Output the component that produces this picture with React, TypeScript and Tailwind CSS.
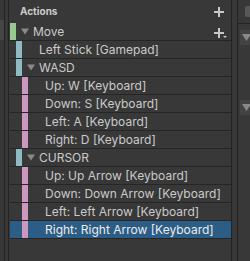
import React from "react";

type Row = {
  label: string;
  level: number;
  color: string;
  fold?: boolean;
  selected?: boolean;
  plus?: boolean;
};

const GREEN = "bg-[#97c98f]";
const TEAL = "bg-[#8fbcc3]";
const PINK = "bg-[#cd97bf]";

const rows: Row[] = [
  { label: "Move", level: 0, color: GREEN, fold: true, plus: true },
  { label: "Left Stick [Gamepad]", level: 1, color: TEAL },
  { label: "WASD", level: 1, color: TEAL, fold: true },
  { label: "Up: W [Keyboard]", level: 2, color: PINK },
  { label: "Down: S [Keyboard]", level: 2, color: PINK },
  { label: "Left: A [Keyboard]", level: 2, color: PINK },
  { label: "Right: D [Keyboard]", level: 2, color: PINK },
  { label: "CURSOR", level: 1, color: TEAL, fold: true },
  { label: "Up: Up Arrow [Keyboard]", level: 2, color: PINK },
  { label: "Down: Down Arrow [Keyboard]", level: 2, color: PINK },
  { label: "Left: Left Arrow [Keyboard]", level: 2, color: PINK },
  { label: "Right: Right Arrow [Keyboard]", level: 2, color: PINK, selected: true },
];

function Tri() {
  return (
    <svg width="9" height="7" viewBox="0 0 9 7">
      <path d="M0 0 H9 L4.5 7 Z" fill="#8a8a8a" />
    </svg>
  );
}

function Plus({ drop = false }: { drop?: boolean }) {
  return (
    <svg width="14" height="12" viewBox="0 0 14 12">
      <rect x="4" y="1" width="2" height="10" fill="#c8c8c8" />
      <rect x="0" y="5" width="10" height="2" fill="#c8c8c8" />
      {drop && <path d="M9 9 H13 L11 11 Z" fill="#c8c8c8" />}
    </svg>
  );
}

function TreeRow({ r }: { r: Row }) {
  const indent = ["w-0", "w-[6px]", "w-[12px]"][r.level];
  return (
    <div
      className={`flex h-[18px] border-b border-[#262626] ${
        r.selected ? "bg-[#2c5d87] text-[#ebebeb]" : "text-[#cacaca]"
      }`}
    >
      <div className={`${indent} shrink-0`} />
      <div className={`w-[6px] shrink-0 ${r.color}`} />
      <div className="w-[5px] shrink-0" />
      <div className="w-[8px] shrink-0 flex items-center">{r.fold && <Tri />}</div>
      <div className="w-[4px] shrink-0" />
      <div className="flex-1 leading-[17px] text-[12px] whitespace-nowrap overflow-hidden">
        {r.label}
      </div>
      {r.plus && (
        <div className="w-[14px] mr-[3px] flex items-center pt-[3px]">
          <Plus drop />
        </div>
      )}
    </div>
  );
}

export default function App() {
  return (
    <div
      className="w-[250px] h-[261px] flex bg-[#383838] overflow-hidden"
      style={{ fontFamily: "Inter, 'Noto Sans', sans-serif" }}
    >
      {/* left pane edge */}
      <div className="w-[5px] shrink-0 border-r border-[#232323] flex flex-col">
        <div className="h-[20px]" />
        <div className="h-[20px] bg-[#464646]" />
      </div>
      <div className="w-[3px] shrink-0" />
      {/* actions pane */}
      <div className="w-[224px] shrink-0 border-x border-[#232323] pl-[1px] flex flex-col">
        <div className="h-[23px] flex items-center pl-[10px] pr-[3px]">
          <span className="flex-1 text-[10px] font-bold text-[#cacaca]">Actions</span>
          <div className="w-[14px] flex items-center">
            <Plus />
          </div>
        </div>
        {rows.map((r, i) => (
          <TreeRow key={i} r={r} />
        ))}
      </div>
      <div className="w-[5px] shrink-0" />
      {/* properties pane edge */}
      <div className="flex-1 border-l border-[#232323] flex flex-col">
        <div className="h-[24px] border-b border-[#232323] flex items-center pl-[7px]">
          <div className="w-[12px] h-[11px] rounded-[2px] bg-[#585858]" />
        </div>
        <div className="h-[6px]" />
        <div className="ml-[2px] h-[15px] bg-[#434343] flex items-center pl-[2px]">
          <Tri />
        </div>
        <div className="h-[55px]" />
        <div className="ml-[2px] h-[15px] bg-[#434343] flex items-center pl-[2px]">
          <Tri />
        </div>
      </div>
    </div>
  );
}
